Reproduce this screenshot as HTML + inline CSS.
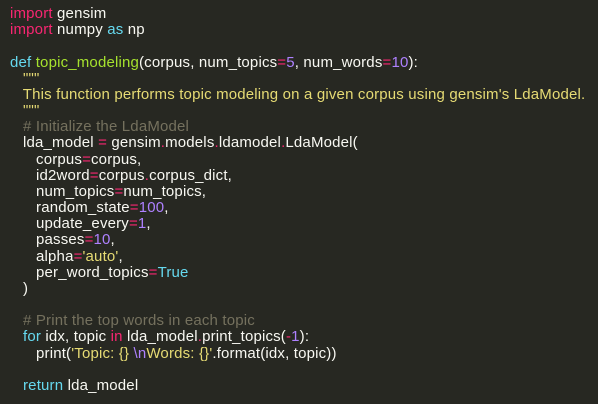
<!DOCTYPE html>
<html><head><meta charset="utf-8"><style>
html,body{margin:0;padding:0;background:#272822;width:598px;height:404px;overflow:hidden}
pre{margin:0;padding:6px 0 0 10px;font-family:"Liberation Sans","DejaVu Sans",sans-serif;font-size:15px;line-height:16.17px;color:#f8f8f2;white-space:pre;letter-spacing:0.17px}
.k{color:#f92672}.c{color:#66d9ef}.f{color:#a6e22e}.s{color:#e6db74}.m{color:#75715e}.n{color:#ae81ff}
</style></head><body><pre><span class="k">import</span> gensim
<span class="k">import</span> numpy <span class="c">as</span> np

<span class="c">def</span> <span class="f">topic_modeling</span>(corpus, num_topics<span class="k">=</span><span class="n">5</span>, num_words<span class="k">=</span><span class="n">10</span>):
   <span class="s">"""</span>
   <span class="s">This function performs topic modeling on a given corpus using gensim's LdaModel.</span>
   <span class="s">"""</span>
   <span class="m"># Initialize the LdaModel</span>
   lda_model <span class="k">=</span> gensim<span class="k">.</span>models<span class="k">.</span>ldamodel<span class="k">.</span>LdaModel(
      corpus<span class="k">=</span>corpus,
      id2word<span class="k">=</span>corpus<span class="k">.</span>corpus_dict,
      num_topics<span class="k">=</span>num_topics,
      random_state<span class="k">=</span><span class="n">100</span>,
      update_every<span class="k">=</span><span class="n">1</span>,
      passes<span class="k">=</span><span class="n">10</span>,
      alpha<span class="k">=</span><span class="s">'auto'</span>,
      per_word_topics<span class="k">=</span><span class="c">True</span>
   )

   <span class="m"># Print the top words in each topic</span>
   <span class="c">for</span> idx, topic <span class="k">in</span> lda_model<span class="k">.</span>print_topics(<span class="k">-</span><span class="n">1</span>):
      print(<span class="s">'Topic: {} </span><span class="n">\n</span><span class="s">Words: {}'</span>.format(idx, topic))

   <span class="c">return</span> lda_model
</pre></body></html>
